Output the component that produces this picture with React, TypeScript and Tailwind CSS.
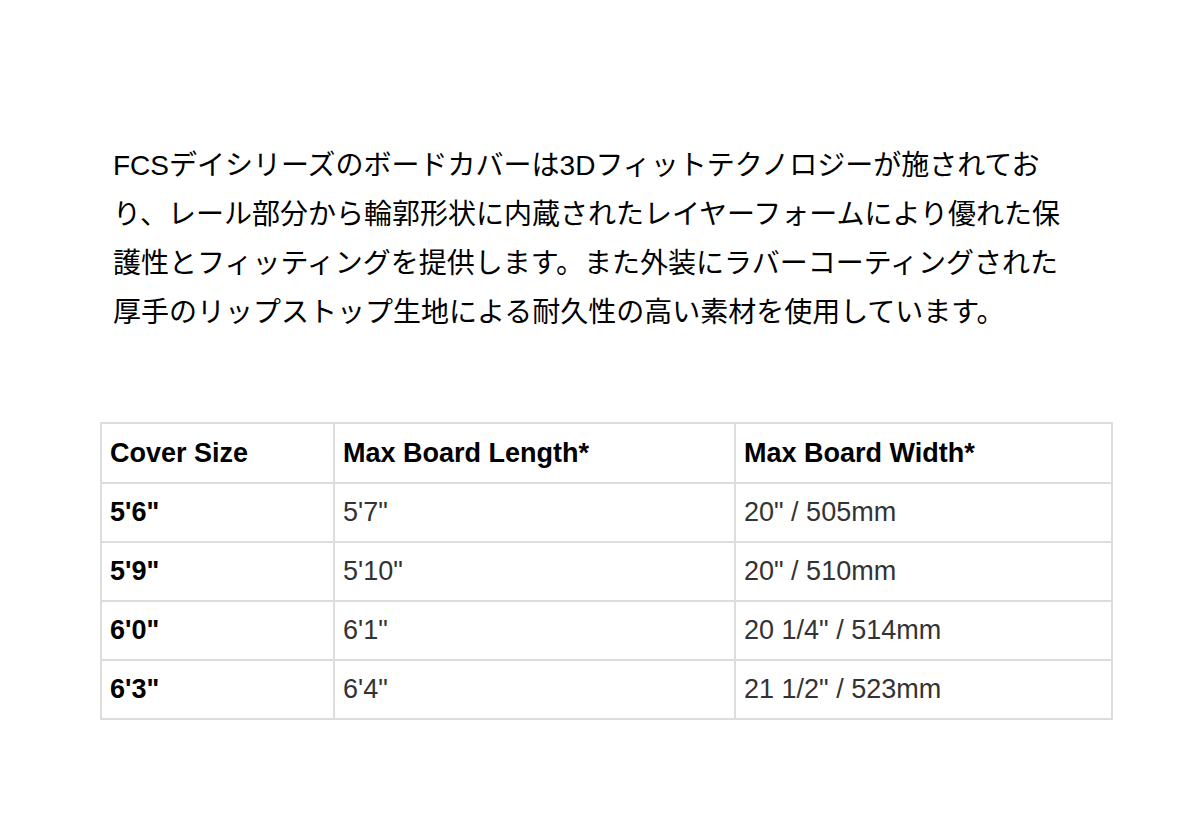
import React from "react";

type Row = {
  size: string;
  length: string;
  width: string;
};

const rows: Row[] = [
  { size: "5'6\"", length: "5'7\"", width: "20\" / 505mm" },
  { size: "5'9\"", length: "5'10\"", width: "20\" / 510mm" },
  { size: "6'0\"", length: "6'1\"", width: "20 1/4\" / 514mm" },
  { size: "6'3\"", length: "6'4\"", width: "21 1/2\" / 523mm" },
];

const lines = [
  "FCSデイシリーズのボードカバーは3Dフィットテクノロジーが施されてお",
  "り、レール部分から輪郭形状に内蔵されたレイヤーフォームにより優れた保",
  "護性とフィッティングを提供します。また外装にラバーコーティングされた",
  "厚手のリップストップ生地による耐久性の高い素材を使用しています。",
];

export default function App() {
  return (
    <div
      className="w-[1200px] h-[818px] bg-white overflow-hidden"
      style={{ fontFamily: '"Liberation Sans", "Noto Sans CJK JP", sans-serif' }}
    >
      {/* Description */}
      <p className="pt-[141px] pl-[113px] text-[28px] leading-[49px] text-black whitespace-nowrap">
        {lines.map((l, i) => (
          <span key={i} className="block">
            {l}
          </span>
        ))}
      </p>

      {/* Size chart */}
      <table className="ml-[100px] mt-[85px] w-[1013px] border-collapse border-2 border-[#dddddd] text-[27px] table-fixed">
        <thead>
          <tr className="h-[60px]">
            <th className="w-[233px] border-2 border-[#dddddd] px-[8px] text-left font-bold text-black">
              Cover Size
            </th>
            <th className="w-[401px] border-2 border-[#dddddd] px-[8px] text-left font-bold text-black">
              Max Board Length*
            </th>
            <th className="border-2 border-[#dddddd] px-[8px] text-left font-bold text-black">
              Max Board Width*
            </th>
          </tr>
        </thead>
        <tbody>
          {rows.map((r) => (
            <tr key={r.size} className="h-[59px]">
              <td className="border-2 border-[#dddddd] px-[8px] font-bold text-black">{r.size}</td>
              <td className="border-2 border-[#dddddd] px-[8px] text-[#333333]">{r.length}</td>
              <td className="border-2 border-[#dddddd] px-[8px] text-[#333333]">{r.width}</td>
            </tr>
          ))}
        </tbody>
      </table>
    </div>
  );
}
